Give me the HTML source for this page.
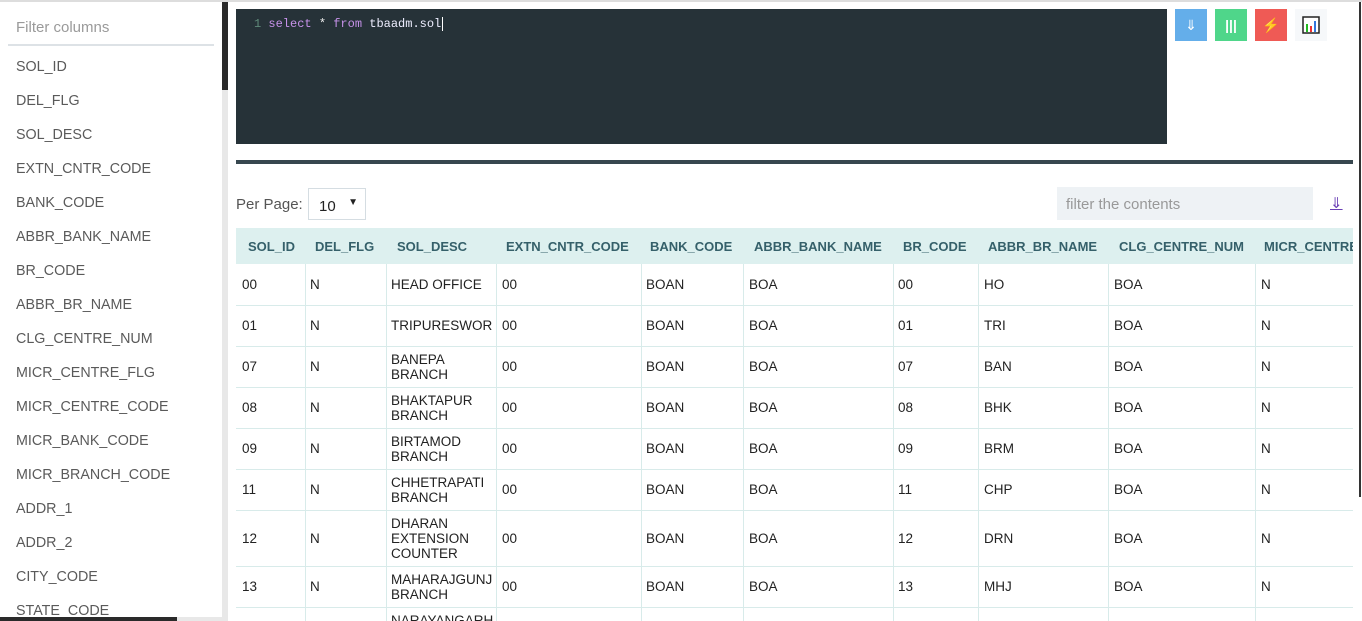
<!DOCTYPE html>
<html><head><meta charset="utf-8"><style>
*{margin:0;padding:0;box-sizing:border-box}
html,body{width:1362px;height:621px;overflow:hidden}
body{background:#fff;font-family:"Liberation Sans",sans-serif;position:relative}
.topb{position:absolute;left:0;top:0;width:1362px;height:2px;background:#ddd}
.side{position:absolute;left:0;top:2px;width:222px;height:619px;overflow:hidden}
.side .f{position:absolute;left:16px;top:17px;font-size:15px;color:#9a9a9a}
.side .ul{position:absolute;left:8px;top:42px;width:206px;height:2px;background:#dde2e6}
.side .it{position:absolute;left:16px;font-size:14.3px;color:#5a5a5a}
.sb{position:absolute;left:222px;top:2px;width:6px;height:619px;background:#e8e8e8}
.sb i{position:absolute;left:0;top:0;width:6px;height:88px;background:#2a2a2a}
.hsb{position:absolute;left:0;top:617px;width:177px;height:4px;background:#2a2a2a}
.hsb2{position:absolute;left:177px;top:617px;width:45px;height:4px;background:#e8e8e8}
.ed{position:absolute;left:236px;top:9px;width:931px;height:135px;background:#263238;font-family:"Liberation Mono",monospace;font-size:12px}
.btn{position:absolute;top:9px;width:32px;height:32px;color:#fff;text-align:center;line-height:32px;font-size:14px}
.div{position:absolute;left:236px;top:160px;width:1117px;height:4px;background:#37474f}
.pp{position:absolute;left:236px;top:196px;font-size:15px;color:#555}
.sel{position:absolute;left:308px;top:188px;width:58px;height:32px;border:1px solid #d5dde2;font-size:15px;padding:9px 0 0 10px;color:#222}
.sel span{position:absolute;right:7px;top:8px;font-size:10px}
.flt{position:absolute;left:1057px;top:187px;width:256px;height:33px;background:#eef2f5;font-size:15px;color:#999;padding:9px 0 0 9px}
.dl{position:absolute;left:1330px;top:194px;color:#6a3fb5;font-size:15px;text-decoration:underline}
.tbl{position:absolute;left:236px;top:228px;width:1117px;height:393px;overflow:hidden}
.hd{position:absolute;left:0;top:0;width:1117px;height:36px;background:#ddf0ef}
.c{position:absolute;font-size:13.5px;color:#222;line-height:15px;white-space:nowrap}
.h{position:absolute;top:11px;font-size:13px;font-weight:bold;color:#35606a;white-space:nowrap}
.rl{position:absolute;left:0;width:1117px;height:1px;background:#d8ebea}
.vl{position:absolute;top:36px;width:1px;height:357px;background:#d8ebea}
.rb{position:absolute;left:1359px;top:2px;width:2px;height:495px;background:#333}
#rows{position:absolute;left:0;top:0;width:1362px;height:621px;overflow:hidden}
</style></head><body>
<div class="topb"></div>
<div class="side">
<div class="f">Filter columns</div><div class="ul"></div>
<div class="it" style="top:57px">SOL_ID</div>
<div class="it" style="top:91px">DEL_FLG</div>
<div class="it" style="top:125px">SOL_DESC</div>
<div class="it" style="top:159px">EXTN_CNTR_CODE</div>
<div class="it" style="top:193px">BANK_CODE</div>
<div class="it" style="top:227px">ABBR_BANK_NAME</div>
<div class="it" style="top:261px">BR_CODE</div>
<div class="it" style="top:295px">ABBR_BR_NAME</div>
<div class="it" style="top:329px">CLG_CENTRE_NUM</div>
<div class="it" style="top:363px">MICR_CENTRE_FLG</div>
<div class="it" style="top:397px">MICR_CENTRE_CODE</div>
<div class="it" style="top:431px">MICR_BANK_CODE</div>
<div class="it" style="top:465px">MICR_BRANCH_CODE</div>
<div class="it" style="top:499px">ADDR_1</div>
<div class="it" style="top:533px">ADDR_2</div>
<div class="it" style="top:567px">CITY_CODE</div>
<div class="it" style="top:601px">STATE_CODE</div>
</div>
<div class="sb"><i></i></div>
<div class="hsb"></div><div class="hsb2"></div>
<div class="ed"><div style="position:absolute;left:18px;top:8px;white-space:pre"><span style="color:#5f8a7a">1</span> <span style="color:#c792ea">select</span> <span style="color:#eee">*</span> <span style="color:#c792ea">from</span> <span style="color:#eef">tbaadm.sol</span><span style="border-left:1px solid #fff;margin-left:1px"></span></div></div>
<div class="btn" style="left:1175px;background:#64aeea">⇓</div>
<div class="btn" style="left:1215px;background:#4fd68a;font-weight:bold">|||</div>
<div class="btn" style="left:1255px;background:#ef5a55">⚡</div>
<div class="btn" style="left:1295px;background:#f6f8fa"><svg width="18" height="18" viewBox="0 0 18 18" style="margin-top:7px"><rect x="1" y="1" width="16" height="16" fill="#fff" stroke="#222" stroke-width="1.5"/><rect x="4" y="8" width="2" height="8" fill="#2b2"/><rect x="8" y="10" width="2" height="6" fill="#e33"/><rect x="12" y="5" width="2" height="11" fill="#37d"/></svg></div>
<div class="div"></div>
<div class="pp">Per Page:</div>
<div class="sel">10<span>▼</span></div>
<div class="flt">filter the contents</div>
<div class="dl">⇓</div>
<div class="tbl">
<div class="hd"></div>
<div class="h" style="left:12px">SOL_ID</div><div class="h" style="left:79px">DEL_FLG</div><div class="h" style="left:161px">SOL_DESC</div><div class="h" style="left:270px">EXTN_CNTR_CODE</div><div class="h" style="left:414px">BANK_CODE</div><div class="h" style="left:518px">ABBR_BANK_NAME</div><div class="h" style="left:667px">BR_CODE</div><div class="h" style="left:752px">ABBR_BR_NAME</div><div class="h" style="left:883px">CLG_CENTRE_NUM</div><div class="h" style="left:1028px">MICR_CENTRE_FLG</div>
<div class="vl" style="left:69px"></div><div class="vl" style="left:150px"></div><div class="vl" style="left:260px"></div><div class="vl" style="left:405px"></div><div class="vl" style="left:507px"></div><div class="vl" style="left:657px"></div><div class="vl" style="left:742px"></div><div class="vl" style="left:872px"></div><div class="vl" style="left:1019px"></div>
<div class="rl" style="top:77px"></div><div class="rl" style="top:118px"></div><div class="rl" style="top:159px"></div><div class="rl" style="top:200px"></div><div class="rl" style="top:241px"></div><div class="rl" style="top:282px"></div><div class="rl" style="top:338px"></div><div class="rl" style="top:379px"></div>
</div>
<div id="rows"></div>
<div class="rb"></div>
<script>
var rows=[["00","HEAD OFFICE","00","HO",284,1],["01","TRIPURESWOR","01","TRI",325,1],["07","BANEPA<br>BRANCH","07","BAN",366,2],["08","BHAKTAPUR<br>BRANCH","08","BHK",407,2],["09","BIRTAMOD<br>BRANCH","09","BRM",448,2],["11","CHHETRAPATI<br>BRANCH","11","CHP",489,2],["12","DHARAN<br>EXTENSION<br>COUNTER","12","DRN",538,3],["13","MAHARAJGUNJ<br>BRANCH","13","MHJ",586,2]];
var h="";rows.forEach(function(r){var y=r[4]-7;var dy=y-(r[5]-1)*7.5;
function c(x,t,yy){h+='<div class="c" style="left:'+x+'px;top:'+(yy===undefined?y:yy)+'px">'+t+'</div>';}
c(242,r[0]);c(310,"N");c(391,r[1],dy);c(502,"00");c(646,"BOAN");c(749,"BOA");c(898,r[2]);c(984,r[3]);c(1114,"BOA");c(1261,"N");});
h+='<div class="c" style="left:391px;top:613px">NARAYANGARH</div>';
document.getElementById("rows").innerHTML=h;
</script>
</body></html>
